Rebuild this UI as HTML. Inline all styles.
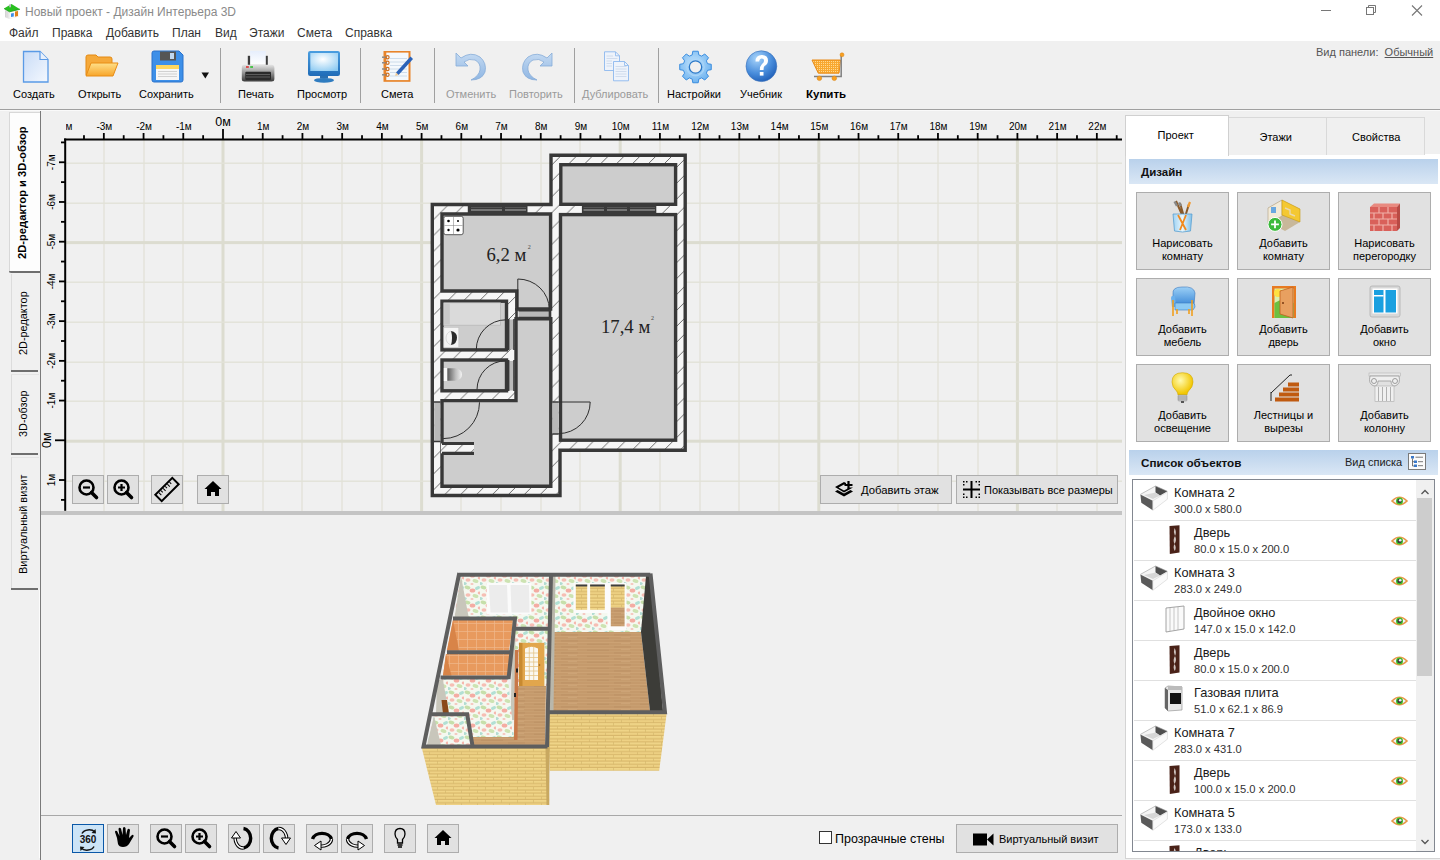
<!DOCTYPE html>
<html><head><meta charset="utf-8"><title>Дизайн Интерьера 3D</title>
<style>
*{margin:0;padding:0;box-sizing:border-box}
html,body{width:1440px;height:860px;overflow:hidden;background:#fff;font-family:"Liberation Sans",sans-serif;color:#000;position:relative}
.a{position:absolute}
.t{position:absolute;white-space:nowrap;line-height:1}
.sep{position:absolute;width:1px;background:#a0a0a0}
.tb{position:absolute;font-size:11px;white-space:nowrap;line-height:1;text-align:center}
.btn{position:absolute;background:#e1e1e1;border:1px solid #adadad}
.vt{position:absolute;transform:rotate(-90deg);transform-origin:0 0;white-space:nowrap;line-height:1}

</style></head><body>
<!-- title bar -->
<div class="a" style="left:0;top:0;width:1440px;height:41px;background:#fff"></div>
<svg class="a" style="left:0;top:0" width="24" height="22" viewBox="0 0 24 22">
  <path d="M5 10 L5 17.5 L9.5 19 L19 16.5 L19 10 L11 8 Z" fill="#e6e6e6"/>
  <path d="M9.5 12 L19 10 V16.5 L9.5 19 Z" fill="#f8f8f8"/>
  <path d="M5.5 10.5 V17 M7 11 V17.5" stroke="#cfcfcf" stroke-width="0.8"/>
  <path d="M4 8.5 L11.5 4 L20 9.2 L9.5 11.8 Z" fill="#28c020"/>
  <path d="M4 8.5 L9.5 11.8 L20 9.2" fill="none" stroke="#1a9a18" stroke-width="0.8"/>
  <rect x="9.3" y="4" width="1.6" height="3.3" fill="#c8c0d0"/>
  <path d="M11 13.5 L13.8 13 V16.5 L11 17 Z" fill="#3c8ce8"/>
  <path d="M15 11.5 L18 11 V16 L15 16.8 Z" fill="#e0801c"/>
</svg>
<div class="t" style="left:25px;top:6px;font-size:12px;color:#8a8a8a">Новый проект - Дизайн Интерьера 3D</div>
<svg class="a" style="left:1318px;top:4px" width="110" height="14" viewBox="0 0 110 14">
  <line x1="3" y1="6.5" x2="13" y2="6.5" stroke="#777" stroke-width="1"/>
  <rect x="48.5" y="3.5" width="7" height="7" fill="none" stroke="#777"/>
  <path d="M50.5 3.5 V1.5 H57.5 V8.5 H55.5" fill="none" stroke="#777"/>
  <path d="M94 1.5 L104 11.5 M104 1.5 L94 11.5" stroke="#777" stroke-width="1.1"/>
</svg>
<!-- menu -->
<div class="t" style="left:9px;top:27px;font-size:12px;color:#333;word-spacing:0">
<span class="t" style="left:0">Файл</span><span class="t" style="left:43px">Правка</span><span class="t" style="left:97px">Добавить</span><span class="t" style="left:163px">План</span><span class="t" style="left:206px">Вид</span><span class="t" style="left:240px">Этажи</span><span class="t" style="left:288px">Смета</span><span class="t" style="left:336px">Справка</span>
</div>
<!-- toolbar -->
<div class="a" style="left:0;top:41px;width:1440px;height:69px;background:#f0f0f0;border-bottom:1px solid #a0a0a0"></div>
<div class="sep" style="left:220px;top:48px;height:55px"></div>
<div class="sep" style="left:360px;top:48px;height:55px"></div>
<div class="sep" style="left:434px;top:48px;height:55px"></div>
<div class="sep" style="left:574px;top:48px;height:55px"></div>
<div class="sep" style="left:658px;top:48px;height:55px"></div>
<div class="tb" style="left:13px;top:89px">Создать</div>
<div class="tb" style="left:78px;top:89px">Открыть</div>
<div class="tb" style="left:139px;top:89px">Сохранить</div>
<div class="tb" style="left:238px;top:89px">Печать</div>
<div class="tb" style="left:297px;top:89px">Просмотр</div>
<div class="tb" style="left:381px;top:89px">Смета</div>
<div class="tb" style="left:446px;top:89px;color:#9a9a9a">Отменить</div>
<div class="tb" style="left:509px;top:89px;color:#9a9a9a">Повторить</div>
<div class="tb" style="left:582px;top:89px;color:#9a9a9a">Дублировать</div>
<div class="tb" style="left:667px;top:89px">Настройки</div>
<div class="tb" style="left:740px;top:89px">Учебник</div>
<div class="tb" style="left:806px;top:89px;font-weight:bold;font-size:11.5px">Купить</div>
<div class="t" style="left:1316px;top:47px;font-size:11px;color:#555">Вид панели:&nbsp; <span style="text-decoration:underline">Обычный</span></div>

<!-- new doc -->
<svg class="a" style="left:22px;top:50px" width="28" height="34" viewBox="0 0 28 34">
  <defs><linearGradient id="gdoc" x1="0" y1="0" x2="1" y2="1"><stop offset="0" stop-color="#c9dcf7"/><stop offset="1" stop-color="#f4f8fe"/></linearGradient></defs>
  <path d="M1.5 1.5 H18 L26 9.5 V32 H1.5 Z" fill="url(#gdoc)" stroke="#5a9ae6" stroke-width="1.3"/>
  <path d="M18 1.5 V9.5 H26" fill="#e8f0fc" stroke="#5a9ae6" stroke-width="1.2"/>
</svg>
<!-- folder -->
<svg class="a" style="left:85px;top:54px" width="34" height="24" viewBox="0 0 34 24">
  <defs><linearGradient id="gfold" x1="0" y1="0" x2="0" y2="1"><stop offset="0" stop-color="#ffe08a"/><stop offset="1" stop-color="#f7a52a"/></linearGradient></defs>
  <path d="M1 3 Q1 1 3 1 H11 L13 3 H25 Q27 3 27 5 V21 H1 Z" fill="#f5a93a" stroke="#e58a12" stroke-width="1"/>
  <path d="M6 9 H33 L28 22 H1 Z" fill="url(#gfold)" stroke="#e88c14" stroke-width="1"/>
</svg>
<!-- floppy -->
<svg class="a" style="left:151px;top:50px" width="33" height="33" viewBox="0 0 33 33">
  <path d="M1 3 Q1 1 3 1 H28 L32 5 V30 Q32 32 30 32 H3 Q1 32 1 30 Z" fill="#3d8fe8" stroke="#2a72cc" stroke-width="1"/>
  <rect x="9" y="1.5" width="16" height="9" fill="#555"/><rect x="19" y="3" width="4" height="6" fill="#c0d8f0"/>
  <rect x="5" y="15" width="23" height="15" fill="#f6f6f6"/><rect x="5" y="15" width="23" height="4" fill="#ffd760"/>
  <path d="M7 21.5 H26 M7 24 H26 M7 26.5 H26" stroke="#c8c8c8" stroke-width="0.8"/>
</svg>
<svg class="a" style="left:201px;top:72px" width="9" height="7" viewBox="0 0 9 7"><path d="M0.5 0.5 H8 L4.3 6.5 Z" fill="#111"/></svg>
<!-- printer -->
<svg class="a" style="left:240px;top:49px" width="36" height="34" viewBox="0 0 36 34">
  <defs>
    <linearGradient id="gpbody" x1="0" y1="0" x2="0" y2="1"><stop offset="0" stop-color="#e4e4e4"/><stop offset="0.45" stop-color="#9a9a9a"/><stop offset="1" stop-color="#3a3a3a"/></linearGradient>
    <linearGradient id="gpaper" x1="0" y1="0" x2="0" y2="1"><stop offset="0" stop-color="#e6eefc"/><stop offset="1" stop-color="#ffffff"/></linearGradient>
  </defs>
  <rect x="7.8" y="6.8" width="20" height="10" fill="#3c3c3c"/>
  <rect x="10.1" y="1.9" width="15.7" height="14" fill="url(#gpaper)"/>
  <path d="M4 15.8 H31.5 Q34.4 15.8 34.4 19 V30 Q34.4 32.5 31.5 32.5 H4.5 Q1.8 32.5 1.8 30 V19 Q1.8 15.8 4 15.8 Z" fill="url(#gpbody)"/>
  <rect x="5.3" y="22.8" width="25.7" height="8.3" rx="1" fill="#2a2a2a"/>
  <path d="M6 25.5 H30 M6 28 H30" stroke="#6a6a6a" stroke-width="0.8"/>
  <rect x="6" y="17.2" width="2.8" height="1.6" fill="#e03030"/><rect x="10.2" y="17.2" width="2.8" height="1.6" fill="#30c030"/>
</svg>
<!-- monitor -->
<svg class="a" style="left:306px;top:50px" width="35" height="34" viewBox="0 0 35 34">
  <defs><radialGradient id="gmon" cx="0.45" cy="0.35" r="0.75"><stop offset="0" stop-color="#ffffff"/><stop offset="1" stop-color="#8ccaf2"/></radialGradient>
  <linearGradient id="gbez" x1="0" y1="0" x2="0" y2="1"><stop offset="0" stop-color="#4a9ee0"/><stop offset="1" stop-color="#1f6cb8"/></linearGradient></defs>
  <rect x="2" y="0.9" width="32" height="25" rx="2.2" fill="url(#gbez)"/>
  <rect x="4.3" y="3" width="27.7" height="18" fill="url(#gmon)"/>
  <rect x="14" y="26" width="8" height="2.6" fill="#2a6fb0"/>
  <ellipse cx="18" cy="30.3" rx="10" ry="2.4" fill="#2f7cc0"/>
</svg>
<!-- notebook -->
<svg class="a" style="left:381px;top:50px" width="33" height="33" viewBox="0 0 33 33">
  <rect x="2.5" y="1" width="27" height="30.8" fill="#e8842a"/>
  <rect x="5.3" y="2.6" width="22.2" height="27.5" fill="#f4f8fc"/>
  <path d="M9 8.5 H26 M9 12 H26 M9 15.5 H26 M9 19 H26 M9 22.5 H26 M9 26 H26" stroke="#c4d4e6" stroke-width="0.8"/>
  <g fill="none" stroke="#8a8a8a" stroke-width="1.5"><path d="M1 7.2 H6"/><path d="M1 12.75 H6"/><path d="M1 19 H6"/><path d="M1 24.8 H6"/></g>
  <g fill="none" stroke="#d07020" stroke-width="1.2"><circle cx="6.5" cy="7.2" r="1.6"/><circle cx="6.5" cy="12.75" r="1.6"/><circle cx="6.5" cy="19" r="1.6"/><circle cx="6.5" cy="24.8" r="1.6"/></g>
  <path d="M15 22.5 L29.5 6.5 L32 9 L17.5 25 Z" fill="#2a62b8"/>
  <path d="M15 22.5 L17.5 25 L14.2 26 Z" fill="#f0c890"/>
</svg>
<!-- undo -->
<svg class="a" style="left:454px;top:50px" width="34" height="33" viewBox="0 0 34 33">
  <defs><linearGradient id="gund" x1="0" y1="0" x2="0" y2="1"><stop offset="0" stop-color="#c4daf2"/><stop offset="1" stop-color="#8fb6e3"/></linearGradient></defs>
  <path d="M2 3 L2 16 L14 16 L10 12 Q15 8 21 10 Q27 13 26 20 Q25 26 17 30 Q28 30 31 22 Q33 13 26 7 Q17 1 7 8 Z" fill="url(#gund)" stroke="#86acd8" stroke-width="0.8"/>
</svg>
<!-- redo -->
<svg class="a" style="left:520px;top:50px" width="34" height="33" viewBox="0 0 34 33">
  <path d="M32 3 L32 16 L20 16 L24 12 Q19 8 13 10 Q7 13 8 20 Q9 26 17 30 Q6 30 3 22 Q1 13 8 7 Q17 1 27 8 Z" fill="url(#gund)" stroke="#86acd8" stroke-width="0.8"/>
</svg>
<!-- duplicate -->
<svg class="a" style="left:603px;top:51px" width="28" height="32" viewBox="0 0 28 32">
  <path d="M1.5 0.8 H12.5 L16.5 4.8 V19.5 H1.5 Z" fill="#eef3fb" stroke="#8cb8ee" stroke-width="0.9"/>
  <path d="M12.5 0.8 V4.8 H16.5" fill="none" stroke="#8cb8ee" stroke-width="0.8"/>
  <path d="M10.5 10.5 H21.5 L25.5 14.5 V29.8 H10.5 Z" fill="#eef3fb" stroke="#8cb8ee" stroke-width="0.9"/>
  <path d="M21.5 10.5 V14.5 H25.5" fill="none" stroke="#8cb8ee" stroke-width="0.8"/>
  <path d="M3.5 5 H10 M3.5 7.5 H14.5 M3.5 10 H9 M3.5 12.5 H9 M3.5 15 H9 M12.5 15.5 H23.5 M12.5 18 H23.5 M12.5 20.5 H23.5 M12.5 23 H23.5 M12.5 25.5 H23.5" stroke="#c8d6ea" stroke-width="0.8"/>
</svg>
<!-- gear -->
<svg class="a" style="left:678px;top:50px" width="35" height="34" viewBox="0 0 35 34">
  <defs><radialGradient id="ggear" cx="0.45" cy="0.4" r="0.6"><stop offset="0" stop-color="#c4e4fc"/><stop offset="1" stop-color="#70b4f0"/></radialGradient></defs>
  <path d="M29.55 13.67 L33.27 14.29 L33.27 19.71 L29.55 20.33 L28.38 23.16 L30.56 26.24 L26.74 30.06 L23.66 27.88 L20.83 29.05 L20.21 32.77 L14.79 32.77 L14.17 29.05 L11.34 27.88 L8.26 30.06 L4.44 26.24 L6.62 23.16 L5.45 20.33 L1.73 19.71 L1.73 14.29 L5.45 13.67 L6.62 10.84 L4.44 7.76 L8.26 3.94 L11.34 6.12 L14.17 4.95 L14.79 1.23 L20.21 1.23 L20.83 4.95 L23.66 6.12 L26.74 3.94 L30.56 7.76 L28.38 10.84 Z" fill="url(#ggear)" stroke="#2f86dc" stroke-width="0.9" stroke-linejoin="round"/>
  <circle cx="17.5" cy="17" r="8.6" fill="none" stroke="#a8d4f8" stroke-width="1.2"/>
  <circle cx="17.5" cy="17" r="6.2" fill="#f0f0f0" stroke="#2a78c8" stroke-width="1.3"/>
</svg>
<!-- help -->
<svg class="a" style="left:745px;top:50px" width="33" height="33" viewBox="0 0 33 33">
  <defs><radialGradient id="ghelp" cx="0.35" cy="0.25" r="0.8"><stop offset="0" stop-color="#a8d4fa"/><stop offset="0.6" stop-color="#4a8edc"/><stop offset="1" stop-color="#1f5fb8"/></radialGradient></defs>
  <circle cx="16.4" cy="16.2" r="15.4" fill="url(#ghelp)" stroke="#3a70b8" stroke-width="0.6"/>
  <path d="M10.5 11.5 Q10.5 5 16.8 5 Q23 5 23 10.5 Q23 14 19.5 16 Q18.5 17 18.5 20 H14.8 Q14.8 16 16.8 14.2 Q19 12.6 19 10.8 Q19 8.5 16.8 8.5 Q14.5 8.5 14.2 11.5 Z" fill="#fff"/>
  <rect x="14.8" y="22" width="3.7" height="3.6" fill="#fff"/>
</svg>
<!-- cart -->
<svg class="a" style="left:809px;top:51px" width="37" height="31" viewBox="0 0 37 31">
  <defs><pattern id="cdots" patternUnits="userSpaceOnUse" width="2" height="2"><rect width="2" height="2" fill="#f8a830"/><rect width="1" height="1" fill="#ffd890"/></pattern></defs>
  <path d="M3 9 H31.5 L30 22.2 H9.3 Z" fill="url(#cdots)" stroke="#e88a18" stroke-width="1"/>
  <path d="M32.2 4 V25.6 H5" stroke="#808080" stroke-width="1.5" fill="none"/>
  <circle cx="33" cy="3.8" r="2" fill="#f8a020" stroke="#d88010" stroke-width="0.5"/>
  <circle cx="10.4" cy="27.3" r="2.3" fill="#f8a020" stroke="#d88010" stroke-width="0.5"/><circle cx="25.3" cy="27.3" r="2.3" fill="#f8a020" stroke="#d88010" stroke-width="0.5"/>
</svg>

<div class="a" style="left:41px;top:110px;width:1081px;height:401px;background:#f0f0f0"></div>
<svg class="a" style="left:0;top:0" width="1440" height="860" viewBox="0 0 1440 860">
<defs><clipPath id="gclip"><rect x="66" y="140" width="1056" height="371"/></clipPath></defs>
<g clip-path="url(#gclip)">
<rect x="63.50" y="140" width="1" height="371" fill="#dddcd0"/>
<rect x="103.50" y="140" width="1" height="371" fill="#dddcd0"/>
<rect x="143.50" y="140" width="1" height="371" fill="#dddcd0"/>
<rect x="182.50" y="140" width="1" height="371" fill="#dddcd0"/>
<rect x="221.50" y="140" width="3" height="371" fill="#dcdcd0"/>
<rect x="262.50" y="140" width="1" height="371" fill="#dddcd0"/>
<rect x="301.50" y="140" width="1" height="371" fill="#dddcd0"/>
<rect x="341.50" y="140" width="1" height="371" fill="#dddcd0"/>
<rect x="381.50" y="140" width="1" height="371" fill="#dddcd0"/>
<rect x="420.10" y="140" width="3" height="371" fill="#dcdcd0"/>
<rect x="460.50" y="140" width="1" height="371" fill="#dddcd0"/>
<rect x="500.50" y="140" width="1" height="371" fill="#dddcd0"/>
<rect x="540.50" y="140" width="1" height="371" fill="#dddcd0"/>
<rect x="579.50" y="140" width="1" height="371" fill="#dddcd0"/>
<rect x="618.70" y="140" width="3" height="371" fill="#dcdcd0"/>
<rect x="659.50" y="140" width="1" height="371" fill="#dddcd0"/>
<rect x="699.50" y="140" width="1" height="371" fill="#dddcd0"/>
<rect x="738.50" y="140" width="1" height="371" fill="#dddcd0"/>
<rect x="778.50" y="140" width="1" height="371" fill="#dddcd0"/>
<rect x="817.30" y="140" width="3" height="371" fill="#dcdcd0"/>
<rect x="858.50" y="140" width="1" height="371" fill="#dddcd0"/>
<rect x="897.50" y="140" width="1" height="371" fill="#dddcd0"/>
<rect x="937.50" y="140" width="1" height="371" fill="#dddcd0"/>
<rect x="977.50" y="140" width="1" height="371" fill="#dddcd0"/>
<rect x="1015.90" y="140" width="3" height="371" fill="#dcdcd0"/>
<rect x="1056.50" y="140" width="1" height="371" fill="#dddcd0"/>
<rect x="1096.50" y="140" width="1" height="371" fill="#dddcd0"/>
<rect x="66" y="122.50" width="1056" height="1.4" fill="#e2e2d8"/>
<rect x="66" y="162.50" width="1056" height="1.4" fill="#e2e2d8"/>
<rect x="66" y="202.50" width="1056" height="1.4" fill="#e2e2d8"/>
<rect x="66" y="241.10" width="1056" height="3" fill="#dcdcd0"/>
<rect x="66" y="281.50" width="1056" height="1.4" fill="#e2e2d8"/>
<rect x="66" y="321.50" width="1056" height="1.4" fill="#e2e2d8"/>
<rect x="66" y="361.50" width="1056" height="1.4" fill="#e2e2d8"/>
<rect x="66" y="400.50" width="1056" height="1.4" fill="#e2e2d8"/>
<rect x="66" y="439.70" width="1056" height="3" fill="#dcdcd0"/>
<rect x="66" y="480.50" width="1056" height="1.4" fill="#e2e2d8"/>
<rect x="66" y="520.50" width="1056" height="1.4" fill="#e2e2d8"/>
</g>
<rect x="64" y="138.5" width="1058" height="2" fill="#000"/>
<rect x="64.2" y="138.5" width="2" height="372.3" fill="#000"/>
<g fill="#000">
<rect x="83.08" y="135.2" width="1.8" height="4"/>
<rect x="102.94" y="133" width="1.8" height="6"/>
<rect x="122.80" y="135.2" width="1.8" height="4"/>
<rect x="142.66" y="133" width="1.8" height="6"/>
<rect x="162.52" y="135.2" width="1.8" height="4"/>
<rect x="182.38" y="133" width="1.8" height="6"/>
<rect x="202.24" y="135.2" width="1.8" height="4"/>
<rect x="222.10" y="129" width="1.8" height="10"/>
<rect x="241.96" y="135.2" width="1.8" height="4"/>
<rect x="261.82" y="133" width="1.8" height="6"/>
<rect x="281.68" y="135.2" width="1.8" height="4"/>
<rect x="301.54" y="133" width="1.8" height="6"/>
<rect x="321.40" y="135.2" width="1.8" height="4"/>
<rect x="341.26" y="133" width="1.8" height="6"/>
<rect x="361.12" y="135.2" width="1.8" height="4"/>
<rect x="380.98" y="133" width="1.8" height="6"/>
<rect x="400.84" y="135.2" width="1.8" height="4"/>
<rect x="420.70" y="133" width="1.8" height="6"/>
<rect x="440.56" y="135.2" width="1.8" height="4"/>
<rect x="460.42" y="133" width="1.8" height="6"/>
<rect x="480.28" y="135.2" width="1.8" height="4"/>
<rect x="500.14" y="133" width="1.8" height="6"/>
<rect x="520.00" y="135.2" width="1.8" height="4"/>
<rect x="539.86" y="133" width="1.8" height="6"/>
<rect x="559.72" y="135.2" width="1.8" height="4"/>
<rect x="579.58" y="133" width="1.8" height="6"/>
<rect x="599.44" y="135.2" width="1.8" height="4"/>
<rect x="619.30" y="133" width="1.8" height="6"/>
<rect x="639.16" y="135.2" width="1.8" height="4"/>
<rect x="659.02" y="133" width="1.8" height="6"/>
<rect x="678.88" y="135.2" width="1.8" height="4"/>
<rect x="698.74" y="133" width="1.8" height="6"/>
<rect x="718.60" y="135.2" width="1.8" height="4"/>
<rect x="738.46" y="133" width="1.8" height="6"/>
<rect x="758.32" y="135.2" width="1.8" height="4"/>
<rect x="778.18" y="133" width="1.8" height="6"/>
<rect x="798.04" y="135.2" width="1.8" height="4"/>
<rect x="817.90" y="133" width="1.8" height="6"/>
<rect x="837.76" y="135.2" width="1.8" height="4"/>
<rect x="857.62" y="133" width="1.8" height="6"/>
<rect x="877.48" y="135.2" width="1.8" height="4"/>
<rect x="897.34" y="133" width="1.8" height="6"/>
<rect x="917.20" y="135.2" width="1.8" height="4"/>
<rect x="937.06" y="133" width="1.8" height="6"/>
<rect x="956.92" y="135.2" width="1.8" height="4"/>
<rect x="976.78" y="133" width="1.8" height="6"/>
<rect x="996.64" y="135.2" width="1.8" height="4"/>
<rect x="1016.50" y="133" width="1.8" height="6"/>
<rect x="1036.36" y="135.2" width="1.8" height="4"/>
<rect x="1056.22" y="133" width="1.8" height="6"/>
<rect x="1076.08" y="135.2" width="1.8" height="4"/>
<rect x="1095.94" y="133" width="1.8" height="6"/>
<rect x="1115.80" y="135.2" width="1.8" height="4"/>
<rect x="61" y="141.50" width="4" height="1.8"/>
<rect x="59" y="161.36" width="6" height="1.8"/>
<rect x="61" y="181.22" width="4" height="1.8"/>
<rect x="59" y="201.08" width="6" height="1.8"/>
<rect x="61" y="220.94" width="4" height="1.8"/>
<rect x="59" y="240.80" width="6" height="1.8"/>
<rect x="61" y="260.66" width="4" height="1.8"/>
<rect x="59" y="280.52" width="6" height="1.8"/>
<rect x="61" y="300.38" width="4" height="1.8"/>
<rect x="59" y="320.24" width="6" height="1.8"/>
<rect x="61" y="340.10" width="4" height="1.8"/>
<rect x="59" y="359.96" width="6" height="1.8"/>
<rect x="61" y="379.82" width="4" height="1.8"/>
<rect x="59" y="399.68" width="6" height="1.8"/>
<rect x="55" y="439.40" width="10" height="1.8"/>
<rect x="59" y="479.12" width="6" height="1.8"/>
<rect x="61" y="498.98" width="4" height="1.8"/>
</g>
<defs><clipPath id="rclip"><rect x="66" y="110" width="1056" height="28"/></clipPath><clipPath id="lclip"><rect x="41" y="141" width="24" height="370"/></clipPath></defs>
<g clip-path="url(#rclip)" font-family="Liberation Sans" font-size="10" text-anchor="middle" fill="#000">
<text x="64.62" y="130">-4м</text>
<text x="104.34" y="130">-3м</text>
<text x="144.06" y="130">-2м</text>
<text x="183.78" y="130">-1м</text>
<text x="223.00" y="125.5" font-size="12.5">0м</text>
<text x="263.22" y="130">1м</text>
<text x="302.94" y="130">2м</text>
<text x="342.66" y="130">3м</text>
<text x="382.38" y="130">4м</text>
<text x="422.10" y="130">5м</text>
<text x="461.82" y="130">6м</text>
<text x="501.54" y="130">7м</text>
<text x="541.26" y="130">8м</text>
<text x="580.98" y="130">9м</text>
<text x="620.70" y="130">10м</text>
<text x="660.42" y="130">11м</text>
<text x="700.14" y="130">12м</text>
<text x="739.86" y="130">13м</text>
<text x="779.58" y="130">14м</text>
<text x="819.30" y="130">15м</text>
<text x="859.02" y="130">16м</text>
<text x="898.74" y="130">17м</text>
<text x="938.46" y="130">18м</text>
<text x="978.18" y="130">19м</text>
<text x="1017.90" y="130">20м</text>
<text x="1057.62" y="130">21м</text>
<text x="1097.34" y="130">22м</text>
</g>
<g clip-path="url(#lclip)" font-family="Liberation Sans" font-size="10" text-anchor="middle" fill="#000">
<text transform="translate(55,122.54) rotate(-90)">-8м</text>
<text transform="translate(55,162.26) rotate(-90)">-7м</text>
<text transform="translate(55,201.98) rotate(-90)">-6м</text>
<text transform="translate(55,241.70) rotate(-90)">-5м</text>
<text transform="translate(55,281.42) rotate(-90)">-4м</text>
<text transform="translate(55,321.14) rotate(-90)">-3м</text>
<text transform="translate(55,360.86) rotate(-90)">-2м</text>
<text transform="translate(55,400.58) rotate(-90)">-1м</text>
<text transform="translate(51,440.30) rotate(-90)" font-size="12.5">0м</text>
<text transform="translate(55,480.02) rotate(-90)">1м</text>
</g>
</svg>
<div class="a" style="left:0;top:110px;width:41px;height:750px;background:#f0f0f0"></div>
<div class="a" style="left:40px;top:111px;width:1px;height:749px;background:#7a7a7a"></div>
<div class="a" style="left:39px;top:590px;width:1px;height:268px;background:#fcfcfc"></div>
<!-- active tab -->
<div class="a" style="left:9px;top:112px;width:31px;height:161px;background:#fdfdfd;border-left:1px solid #d8d8d8;border-top:1px solid #d8d8d8"></div>
<div class="a" style="left:9px;top:271px;width:31px;height:2px;background:#6e6e6e;border-radius:0 0 0 2px"></div>
<div class="vt" style="left:17px;top:259px;font-size:11.2px;font-weight:bold;color:#000">2D-редактор и 3D-обзор</div>
<!-- tab 2 -->
<div class="a" style="left:11px;top:274px;width:28px;height:98px;border-left:1px solid #dcdcdc"></div>
<div class="a" style="left:11px;top:370px;width:27px;height:2px;background:#6e6e6e"></div>
<div class="vt" style="left:18px;top:355px;font-size:10.9px;color:#000">2D-редактор</div>
<!-- tab 3 -->
<div class="a" style="left:11px;top:374px;width:28px;height:81px;border-left:1px solid #dcdcdc;border-top:1px solid #e4e4e4"></div>
<div class="a" style="left:11px;top:453px;width:27px;height:2px;background:#6e6e6e"></div>
<div class="vt" style="left:18px;top:437px;font-size:10.9px;color:#000">3D-обзор</div>
<!-- tab 4 -->
<div class="a" style="left:11px;top:457px;width:28px;height:133px;border-left:1px solid #dcdcdc;border-top:1px solid #e4e4e4"></div>
<div class="a" style="left:11px;top:588px;width:27px;height:2px;background:#6e6e6e"></div>
<div class="vt" style="left:18px;top:574px;font-size:11px;color:#000">Виртуальный визит</div>

<svg class="a" style="left:0;top:0" width="1440" height="860" viewBox="0 0 1440 860">
<defs>
  <pattern id="hatch" patternUnits="userSpaceOnUse" width="15.9" height="15.9" x="1.2" y="0">
    <rect width="15.9" height="15.9" fill="#f6f6f6"/>
    <path d="M-2 17.9 L17.9 -2 M-2 2 L2 -2 M13.9 17.9 L17.9 13.9" stroke="#3a3a3a" stroke-width="0.75"/>
  </pattern>
</defs>
<!-- outer wall region -->
<path d="M432.3 204.5 H551 V155.3 H685.2 V450.2 H560 V495.5 H432.3 Z" fill="url(#hatch)"/>
<g fill="#cdcdcd" stroke="#383838" stroke-width="3.4" stroke-linejoin="miter">
  <!-- kitchen -->
  <path d="M442 214 H550.6 V309 H516.8 V291 H442 Z"/>
  <!-- balcony -->
  <rect x="560.8" y="164.7" width="114.8" height="39.6"/>
  <!-- big room -->
  <rect x="560.5" y="214.6" width="115.1" height="225.6"/>
  <!-- bathroom -->
  <rect x="442" y="301.2" width="64.5" height="48.7"/>
  <!-- toilet -->
  <rect x="442" y="360" width="64.5" height="30.8"/>
  <!-- hall -->
  <path d="M516 318.7 H550.8 V486.2 H442 V400.6 H516 Z"/>
</g>
<!-- stub wall in hall (hatched) -->
<rect x="441" y="443.5" width="33" height="9.8" fill="url(#hatch)"/>
<path d="M442 443.5 H474 M442 453.3 H474" stroke="#383838" stroke-width="3.2"/>
<!-- door strips -->
<g fill="#b9b9b9">
  <rect x="518.5" y="311" width="30.5" height="6.5"/>
  <rect x="508.5" y="319.5" width="6" height="30"/>
  <rect x="508.5" y="361" width="6" height="29.5"/>
  <rect x="434.2" y="402.3" width="6" height="39"/>
  <rect x="552.4" y="402.2" width="6.3" height="31.8"/>
</g>
<g fill="none" stroke="#383838" stroke-width="1.6">
  <path d="M518.5 310.8 H550 M518.5 317.6 H550"/>
  <path d="M516.5 308 V320 M550 308 V320" stroke-width="2.6"/>
  <path d="M508.6 319 V350 M514 319 V350"/>
  <path d="M508.6 360 V391 M514 360 V391"/>
  <path d="M434 402 H440.5 M434 441.5 H440.5"/>
  <path d="M552.3 402 H558.7 M552.3 434 H558.7"/>
</g>
<!-- outer boundary stroke -->
<path d="M432.3 204.5 H551 V155.3 H685.2 V450.2 H560 V495.5 H432.3 Z" fill="none" stroke="#383838" stroke-width="3.4"/>
<!-- windows -->
<rect x="467.8" y="203" width="59.7" height="11.7" fill="#3a3a3a"/>
<path d="M471 210 H502 M505 210 H526" stroke="#8a8a8a" stroke-width="1.6"/>
<path d="M471 207.5 H502 M505 207.5 H526" stroke="#555" stroke-width="1"/>
<rect x="581.9" y="203" width="74.4" height="12" fill="#3a3a3a"/>
<path d="M583.5 210 H604 M607 210 H627 M630 210 H655" stroke="#8a8a8a" stroke-width="1.6"/>
<path d="M583.5 207.5 H604 M607 207.5 H627 M630 207.5 H655" stroke="#555" stroke-width="1"/>
<!-- bathtub, sink, toilet -->
<defs><linearGradient id="gtoil" x1="0" x2="1"><stop offset="0" stop-color="#444"/><stop offset="0.6" stop-color="#bbb"/><stop offset="1" stop-color="#f4f4f4"/></linearGradient></defs>
<rect x="443.8" y="302.8" width="56.7" height="22.4" fill="#dadada" stroke="#b4b4b4" stroke-width="0.7"/>
<rect x="444.3" y="303.5" width="5.5" height="21" fill="#c8c8c8"/>
<rect x="443.8" y="327.5" width="15" height="20" fill="#f4f4f4" stroke="#c4c4c4" stroke-width="0.6"/>
<path d="M451 331 Q457 332 457 337.5 Q457 344 451 345 Q453 338 451 331 Z" fill="#2a2a2a"/>
<path d="M451 331 Q446 333 446 338 Q446 343 451 345" fill="none" stroke="#bbb" stroke-width="0.5"/>
<path d="M445.5 368.2 H455 Q462 369 462 374.5 Q462 380 455 380.7 H445.5 Z" fill="url(#gtoil)"/>
<rect x="443.8" y="368" width="3.5" height="13" fill="#fafafa"/>
<!-- door arcs -->
<g fill="none" stroke="#2e2e2e" stroke-width="1">
  <path d="M517.8 279 A31.5 30.5 0 0 1 549.3 309.5"/>
  <path d="M517.8 279 V309"/>
  <path d="M476.3 349.5 A29.7 29.7 0 0 1 506 319.8"/>
  <path d="M477 389.5 A28.8 28.8 0 0 1 505.8 360.8"/>
  <path d="M479.5 402.3 A36.3 36.3 0 0 1 443.2 438.6"/>
  <path d="M558.6 402 H590.2 A31.6 31.6 0 0 1 558.6 433.6"/>
</g>
<!-- stove -->
<g>
  <rect x="443.8" y="216.3" width="19.4" height="18.4" rx="2" fill="#fff" stroke="#333" stroke-width="0.8"/>
  <path d="M453.5 217 V234 M444.5 225.5 H462.5" stroke="#777" stroke-width="0.5"/>
  <circle cx="448.5" cy="221" r="1.3" fill="#000"/><circle cx="458" cy="221" r="1" fill="#000"/>
  <circle cx="448.5" cy="230" r="1.2" fill="#000"/><circle cx="458" cy="230" r="1.6" fill="#000"/>
</g>
<!-- area labels -->
<text x="486.5" y="261.4" font-family="Liberation Serif" font-size="18.7" fill="#222">6,2 м</text>
<text x="527.8" y="249" font-family="Liberation Serif" font-size="6" fill="#444">2</text>
<text x="601" y="332.6" font-family="Liberation Serif" font-size="18.7" fill="#222">17,4 м</text>
<text x="651" y="320" font-family="Liberation Serif" font-size="6" fill="#444">2</text>
</svg>

<!-- 2D zoom buttons -->
<div class="btn" style="left:72px;top:475px;width:32px;height:29px"></div>
<div class="btn" style="left:107px;top:475px;width:32px;height:29px"></div>
<div class="btn" style="left:151px;top:475px;width:32px;height:29px"></div>
<div class="btn" style="left:197px;top:475px;width:32px;height:29px"></div>
<svg class="a" style="left:0;top:0" width="1440" height="860" viewBox="0 0 1440 860">
  <g fill="none" stroke="#000">
    <circle cx="86.5" cy="487.5" r="7" stroke-width="2.6"/>
    <path d="M91.5 492.5 L96.5 497.5" stroke-width="3.6" stroke-linecap="round"/>
    <path d="M83 487.5 H90" stroke-width="2.2"/>
    <circle cx="121.5" cy="487.5" r="7" stroke-width="2.6"/>
    <path d="M126.5 492.5 L131.5 497.5" stroke-width="3.6" stroke-linecap="round"/>
    <path d="M118 487.5 H125 M121.5 484 V491" stroke-width="2.2"/>
  </g>
  <g transform="translate(167,489.5) rotate(-45)">
    <rect x="-12" y="-4.5" width="24" height="9" fill="none" stroke="#000" stroke-width="2"/>
    <path d="M-8 -3.5 V0 M-5 -3.5 V-1 M-2 -3.5 V0 M1 -3.5 V-1 M4 -3.5 V0 M7 -3.5 V-1" stroke="#000" stroke-width="1"/>
  </g>
  <path d="M213 481 L204.5 489 H207 V496 H211 V492 H215 V496 H219 V489 H221.5 Z" fill="#000"/>
</svg>
<!-- add floor / show dims -->
<div class="btn" style="left:820px;top:475px;width:132px;height:29px"></div>
<div class="btn" style="left:956px;top:475px;width:162px;height:29px"></div>
<svg class="a" style="left:834px;top:480px" width="22" height="19" viewBox="0 0 22 19">
  <path d="M1 11.5 L10 16.5 L19 11.5 L16.5 10 L10 13.5 L3.5 10 Z" fill="#000"/>
  <path d="M1 7 L10 2 L12 3 V5 L10 4.5 L4.5 7.5 L10 10.5 L15.5 7.5 H19 L10 12.5 Z" fill="#000"/>
  <path d="M14.5 1 V9 M10.5 5 H18.5" stroke="#000" stroke-width="2.2"/>
</svg>
<div class="t" style="left:861px;top:485px;font-size:11.3px;color:#000">Добавить этаж</div>
<svg class="a" style="left:963px;top:481px" width="17" height="17" viewBox="0 0 17 17">
  <path d="M8.5 0 V17 M0 8.5 H17" stroke="#000" stroke-width="2"/>
  <g fill="#000"><rect x="0" y="0" width="1.5" height="1.5"/><rect x="3" y="0" width="1.5" height="1.5"/><rect x="12.5" y="0" width="1.5" height="1.5"/><rect x="15.5" y="0" width="1.5" height="1.5"/>
  <rect x="0" y="3" width="1.5" height="1.5"/><rect x="15.5" y="3" width="1.5" height="1.5"/><rect x="0" y="12.5" width="1.5" height="1.5"/><rect x="15.5" y="12.5" width="1.5" height="1.5"/>
  <rect x="0" y="15.5" width="1.5" height="1.5"/><rect x="3" y="15.5" width="1.5" height="1.5"/><rect x="12.5" y="15.5" width="1.5" height="1.5"/><rect x="15.5" y="15.5" width="1.5" height="1.5"/></g>
</svg>
<div class="t" style="left:984px;top:485px;font-size:11px;color:#000">Показывать все размеры</div>
<!-- splitter -->
<div class="a" style="left:41px;top:511px;width:1081px;height:4px;background:#c4c4c4"></div>
<!-- 3D area bg -->
<div class="a" style="left:41px;top:515px;width:1081px;height:300px;background:#f0f0f0"></div>
<div class="a" style="left:41px;top:815px;width:1081px;height:1px;background:#a8a8a8"></div>
<div class="a" style="left:41px;top:816px;width:1081px;height:44px;background:#f0f0f0"></div>


<svg class="a" style="left:0;top:0" width="1440" height="860" viewBox="0 0 1440 860">
<defs>
  <filter id="wpblur" x="-20%" y="-20%" width="140%" height="140%"><feGaussianBlur stdDeviation="0.45"/></filter>
  <pattern id="wp" patternUnits="userSpaceOnUse" width="16" height="15">
    <rect width="16" height="15" fill="#f5f8f0"/>
    <g filter="url(#wpblur)">
    <ellipse cx="3.5" cy="2.5" rx="3" ry="1.7" fill="#c6dfaa" transform="rotate(15 3.5 2.5)"/>
    <ellipse cx="8.5" cy="5.5" rx="2.8" ry="2" fill="#f4aca2"/>
    <ellipse cx="13.5" cy="3" rx="2.6" ry="1.7" fill="#b2e0d4" transform="rotate(-20 13.5 3)"/>
    <ellipse cx="4" cy="10" rx="2.5" ry="1.8" fill="#f6beb4"/>
    <ellipse cx="11.5" cy="11" rx="3" ry="1.8" fill="#cde3b2" transform="rotate(15 11.5 11)"/>
    <ellipse cx="15.5" cy="8" rx="1.8" ry="1.4" fill="#f6b8ae"/>
    <ellipse cx="0.5" cy="13.5" rx="2.2" ry="1.5" fill="#b2dcd2"/>
    <ellipse cx="8" cy="14" rx="1.6" ry="1" fill="#f6c4bc"/>
    </g>
  </pattern>
  <pattern id="brick" patternUnits="userSpaceOnUse" width="16" height="6.4">
    <rect width="16" height="6.4" fill="#e9cb7c"/>
    <rect y="0.3" width="16" height="1.1" fill="#f4da8e"/>
    <rect y="3.5" width="16" height="1.1" fill="#f2d68a"/>
    <rect y="2.5" width="16" height="0.7" fill="#d2b066"/>
    <rect y="5.7" width="16" height="0.7" fill="#d2b066"/>
    <rect x="5" y="0" width="0.7" height="2.6" fill="#d6b86c"/>
    <rect x="13" y="3.2" width="0.7" height="2.6" fill="#d6b86c"/>
  </pattern>
  <pattern id="wood" patternUnits="userSpaceOnUse" width="53" height="6">
    <rect width="53" height="6" fill="#c59a6c"/>
    <rect y="0" width="53" height="0.9" fill="#cda375"/>
    <rect y="3" width="53" height="0.8" fill="#c9a072"/>
    <rect x="4" y="1.8" width="22" height="0.7" fill="#b98e62"/>
    <rect x="31" y="4.6" width="17" height="0.7" fill="#b98e62"/>
    <rect x="38" y="1.5" width="9" height="0.6" fill="#d4ac80"/>
  </pattern>
  <pattern id="tile" patternUnits="userSpaceOnUse" width="9" height="8">
    <rect width="9" height="8" fill="#e89a5e"/>
    <rect x="8.3" width="0.7" height="8" fill="#f0b88c"/>
    <rect y="7.3" width="9" height="0.7" fill="#f0b88c"/>
  </pattern>
</defs>
<!-- brick facades -->
<path d="M421.8 748 H548.5 L549.2 805 H436 Z" fill="url(#brick)"/>
<path d="M547.5 713 H666.7 L659.2 770.8 H549.8 Z" fill="url(#brick)"/>
<path d="M545.5 748 L547.5 713 L549.8 713 L549.2 805 L546.5 805 Z" fill="#c8a860"/>
<!-- big room -->
<path d="M553 576 H648 L641 632 H554 Z" fill="url(#wp)"/>
<path d="M554 632 H641 L650 711 H551 Z" fill="url(#wood)"/>
<path d="M550.5 576 H555.5 L553.5 711 H549 Z" fill="#b9b7ab"/>
<path d="M646 576 H651 L663 711 H650 L641 632 Z" fill="#3c3c38"/>
<!-- big room windows -->
<rect x="573.4" y="583" width="35.5" height="30" fill="#fbfbfb"/>
<rect x="607.5" y="583" width="19" height="47" fill="#fbfbfb"/>
<rect x="575.8" y="584.8" width="11.4" height="25" fill="url(#brick)"/>
<rect x="590.1" y="584.8" width="14.7" height="25" fill="url(#brick)"/>
<rect x="610.8" y="584.8" width="13.8" height="23" fill="url(#brick)"/>
<rect x="610.8" y="607.8" width="13.8" height="18.5" fill="url(#wood)"/>
<rect x="575.8" y="584.5" width="11.4" height="2" fill="#3e3e3e"/><rect x="590.1" y="584.5" width="14.7" height="2" fill="#3e3e3e"/><rect x="610.8" y="584.5" width="13.8" height="2" fill="#3e3e3e"/>
<!-- kitchen back wall -->
<path d="M461 576 H550 V628.5 H515 V618 H454 Z" fill="url(#wp)"/>
<path d="M461 576 L468.7 617.5 H454.5 Z" fill="#c8c6bb"/>
<rect x="486.6" y="582.9" width="44.8" height="31.7" fill="#fbfbfb"/>
<path d="M488.8 585 H507 L508 612.5 H490.5 Z" fill="#ececec"/>
<path d="M510.5 585 H529 L529.5 612.5 H511.5 Z" fill="#ececec"/>
<!-- bathroom & toilet tiles -->
<path d="M453 620 H513.5 L509 650.5 H447 Z" fill="url(#tile)"/>
<path d="M453 620 L459 650.5 H447 Z" fill="#d88448"/>
<path d="M446 654 H511 L507.5 675.5 H443 Z" fill="url(#tile)"/>
<path d="M446 654 L451.5 675.5 H443 Z" fill="#d88448"/>
<!-- hall back wall + door -->
<path d="M514 630 H548 V686 H514 Z" fill="url(#wp)"/>
<rect x="519" y="642.8" width="25.4" height="43.5" fill="#e2a64c"/>
<path d="M519 642.8 H522.5 V686.3 H519 Z" fill="#c88a30"/>
<path d="M525 648.5 Q531.5 645 538 648.5 V680 H525 Z" fill="#fbf8f0"/>
<path d="M529.3 646.5 V680 M533.7 646.5 V680 M525 653 H538 M525 657.5 H538 M525 662 H538 M525 666.5 H538 M525 671 H538 M525 675.5 H538" stroke="#e4c488" stroke-width="0.8"/>
<circle cx="539.5" cy="665" r="0.8" fill="#8a5a20"/>
<!-- hall floor -->
<path d="M516 686 H546 L545 745 H472.5 L467.5 737 H514 Z" fill="url(#wood)"/>
<path d="M512.5 630 L515.5 630 L514.5 720 L510.5 720 Z" fill="#c8c6ba"/>
<path d="M515 650 L518.5 650 L517.5 740 L514 740 Z" fill="#c87848"/>
<path d="M516 668.5 L518 668.5 L518 672.5 L516 672.5 Z M514 693 L516 693 L516 697 L514 697 Z" fill="#222"/>
<!-- toilet front wall face -->
<path d="M442 679 H508 L514 737 H467 V715 H438 Z" fill="url(#wp)"/>
<path d="M437 680 L443 680 L449 714 L436 714 Z" fill="#c8c6bb"/>
<path d="M441.5 700 L447 700 L449 714 L443 714 Z" fill="#8a4a1a"/>
<!-- small room -->
<path d="M434 716 H466 L472 745 H427 Z" fill="url(#wp)"/>
<path d="M434 716 L441 745 H427 Z" fill="#c8c6bb"/>
<!-- walls -->
<g fill="none" stroke="#5e5e5e" stroke-width="4" stroke-linejoin="miter">
  <path d="M459 574.8 H650.3"/>
  <path d="M459.3 573 L423.5 746.5 H547.5"/>
  <path d="M650.5 573.5 L665 712.3 H547.5"/>
  <path d="M551 574 L547 747"/>
  <path d="M453 618.5 H515 L508.5 679"/>
  <path d="M447 652.3 H511"/>
  <path d="M440.5 677.5 H508.5"/>
  <path d="M515 628.7 H549"/>
  <path d="M432 714.3 H467.2 L472.5 746"/>
</g>
</svg>

<div class="a" style="left:72px;top:824px;width:32px;height:29px;background:#cce4f7;border:1px solid #0a58a8"></div>
<div class="btn" style="left:107px;top:824px;width:32px;height:29px"></div>
<div class="btn" style="left:150px;top:824px;width:32px;height:29px"></div>
<div class="btn" style="left:185px;top:824px;width:32px;height:29px"></div>
<div class="btn" style="left:228px;top:824px;width:32px;height:29px"></div>
<div class="btn" style="left:263px;top:824px;width:32px;height:29px"></div>
<div class="btn" style="left:306px;top:824px;width:32px;height:29px"></div>
<div class="btn" style="left:341px;top:824px;width:32px;height:29px"></div>
<div class="btn" style="left:384px;top:824px;width:32px;height:29px"></div>
<div class="btn" style="left:427px;top:824px;width:32px;height:29px"></div>
<svg class="a" style="left:0;top:0" width="1440" height="860" viewBox="0 0 1440 860">
  <!-- 360 -->
  <text x="88" y="843" font-family="Liberation Sans" font-size="10" font-weight="bold" text-anchor="middle" fill="#111">360</text>
  <path d="M82 833.5 A7.5 5.5 0 0 1 95 832" fill="none" stroke="#111" stroke-width="1.5"/>
  <path d="M95.5 829 L96 833.5 L91.5 833" fill="#111"/>
  <path d="M94 846.5 A7.5 5.5 0 0 1 81 848" fill="none" stroke="#111" stroke-width="1.5"/>
  <path d="M80.5 851 L80 846.5 L84.5 847" fill="#111"/>
  <!-- hand -->
  <path d="M117 838 L115 832 Q115 830 117 831 L119.5 836 L118.5 829 Q119 827 121 828.5 L122.5 835 L123 828 Q124 826 125.5 828 L126 835 L127.5 829.5 Q129 828 130 830 L129 838 L132 835 Q134 834 133.5 836.5 L129 844 Q127 847 123 847 Q119 847 118 844 Z" fill="#000"/>
  <!-- zoom out/in -->
  <g fill="none" stroke="#000">
    <circle cx="164.5" cy="836.5" r="7" stroke-width="2.6"/>
    <path d="M169.5 841.5 L174.5 846.5" stroke-width="3.6" stroke-linecap="round"/>
    <path d="M161 836.5 H168" stroke-width="2.2"/>
    <circle cx="199.5" cy="836.5" r="7" stroke-width="2.6"/>
    <path d="M204.5 841.5 L209.5 846.5" stroke-width="3.6" stroke-linecap="round"/>
    <path d="M196 836.5 H203 M199.5 833 V840" stroke-width="2.2"/>
  </g>
  <!-- rotate icons -->
  <g fill="none" stroke-linecap="butt">
    <path d="M243.5 828.5 A8 9.8 0 0 1 243.5 848" stroke="#000" stroke-width="3.4"/>
    <path d="M243.5 848 A8 9.8 0 0 1 236 834" stroke="#000" stroke-width="3.4"/>
    <path d="M243.5 848 A8 9.8 0 0 1 236 834" stroke="#fff" stroke-width="1.4"/>
    <path d="M231.5 838 L236 831.5 L240.5 838 Z" fill="#fff" stroke="#000" stroke-width="1"/>
    <path d="M278.5 828.5 A8 9.8 0 0 0 278.5 848" stroke="#000" stroke-width="3.4"/>
    <path d="M278.5 828.5 A8 9.8 0 0 1 286 842" stroke="#000" stroke-width="3.4"/>
    <path d="M278.5 828.5 A8 9.8 0 0 1 286 842" stroke="#fff" stroke-width="1.4"/>
    <path d="M281.5 838 L286 844.5 L290.5 838 Z" fill="#fff" stroke="#000" stroke-width="1"/>
    <path d="M312.5 839 A9.8 7.5 0 0 1 331.5 839" stroke="#000" stroke-width="3.4"/>
    <path d="M331.5 839 A9.8 7.5 0 0 1 318 845.5" stroke="#000" stroke-width="3.4"/>
    <path d="M331.5 839 A9.8 7.5 0 0 1 318 845.5" stroke="#fff" stroke-width="1.4"/>
    <path d="M321 841 L314.5 845.5 L321 850 Z" fill="#fff" stroke="#000" stroke-width="1"/>
    <path d="M347.5 839 A9.8 7.5 0 0 1 366.5 839" stroke="#000" stroke-width="3.4"/>
    <path d="M347.5 839 A9.8 7.5 0 0 0 361 845.5" stroke="#000" stroke-width="3.4"/>
    <path d="M347.5 839 A9.8 7.5 0 0 0 361 845.5" stroke="#fff" stroke-width="1.4"/>
    <path d="M358 841 L364.5 845.5 L358 850 Z" fill="#fff" stroke="#000" stroke-width="1"/>
  </g>
  <!-- bulb -->
  <path d="M400 828.5 Q395 828.5 395 834 Q395 837 397.5 839.5 V843 H402.5 V839.5 Q405 837 405 834 Q405 828.5 400 828.5 Z" fill="none" stroke="#000" stroke-width="1.3"/>
  <path d="M397.5 845 H402.5 M398 847 H402" stroke="#000" stroke-width="1.3"/>
  <!-- home -->
  <path d="M443 830 L434.5 838 H437 V845 H441 V841 H445 V845 H449 V838 H451.5 Z" fill="#000"/>
  <!-- checkbox -->
  <rect x="819.5" y="831.5" width="12" height="12" fill="#fff" stroke="#333" stroke-width="1"/>
</svg>
<div class="t" style="left:835px;top:833px;font-size:12.5px;color:#000">Прозрачные стены</div>
<div class="btn" style="left:956px;top:824px;width:162px;height:29px"></div>
<svg class="a" style="left:973px;top:833px" width="21" height="13" viewBox="0 0 21 13">
  <rect x="0" y="0.5" width="14" height="12" fill="#000"/><path d="M14 6.5 L20.5 0.5 V12.5 Z" fill="#000"/>
</svg>
<div class="t" style="left:999px;top:834px;font-size:11px;color:#000">Виртуальный визит</div>

<div class="a" style="left:1122px;top:110px;width:318px;height:750px;background:#f0f0f0"></div>
<div class="a" style="left:1125px;top:154px;width:315px;height:705px;background:#fff;border-left:1px solid #d4d4d4;border-bottom:1px solid #d4d4d4"></div>
<div class="a" style="left:1228px;top:117px;width:99px;height:38px;background:#f0f0f0;border:1px solid #d9d9d9;border-bottom:none"></div>
<div class="a" style="left:1326px;top:117px;width:99px;height:38px;background:#f0f0f0;border:1px solid #d9d9d9;border-bottom:none"></div>
<div class="a" style="left:1125px;top:115px;width:104px;height:41px;background:#fff;border:1px solid #d0d0d0;border-bottom:none"></div>
<div class="t" style="left:1157.5px;top:130px;font-size:11px;color:#000">Проект</div>
<div class="t" style="left:1259.5px;top:132px;font-size:11px;color:#000">Этажи</div>
<div class="t" style="left:1352px;top:132px;font-size:11px;color:#000">Свойства</div>
<div class="a" style="left:1129px;top:159px;width:309px;height:25px;background:linear-gradient(#b9d1eb,#dae7f5)"></div>
<div class="t" style="left:1141px;top:166.5px;font-size:11.5px;font-weight:bold;color:#111">Дизайн</div>
<div class="btn" style="left:1136px;top:192px;width:93px;height:78px"></div>
<div class="t" style="left:1136px;top:237px;width:93px;text-align:center;font-size:11px;line-height:13px;color:#000">Нарисовать<br>комнату</div>
<div class="btn" style="left:1237px;top:192px;width:93px;height:78px"></div>
<div class="t" style="left:1237px;top:237px;width:93px;text-align:center;font-size:11px;line-height:13px;color:#000">Добавить<br>комнату</div>
<div class="btn" style="left:1338px;top:192px;width:93px;height:78px"></div>
<div class="t" style="left:1338px;top:237px;width:93px;text-align:center;font-size:11px;line-height:13px;color:#000">Нарисовать<br>перегородку</div>
<div class="btn" style="left:1136px;top:278px;width:93px;height:78px"></div>
<div class="t" style="left:1136px;top:323px;width:93px;text-align:center;font-size:11px;line-height:13px;color:#000">Добавить<br>мебель</div>
<div class="btn" style="left:1237px;top:278px;width:93px;height:78px"></div>
<div class="t" style="left:1237px;top:323px;width:93px;text-align:center;font-size:11px;line-height:13px;color:#000">Добавить<br>дверь</div>
<div class="btn" style="left:1338px;top:278px;width:93px;height:78px"></div>
<div class="t" style="left:1338px;top:323px;width:93px;text-align:center;font-size:11px;line-height:13px;color:#000">Добавить<br>окно</div>
<div class="btn" style="left:1136px;top:364px;width:93px;height:78px"></div>
<div class="t" style="left:1136px;top:409px;width:93px;text-align:center;font-size:11px;line-height:13px;color:#000">Добавить<br>освещение</div>
<div class="btn" style="left:1237px;top:364px;width:93px;height:78px"></div>
<div class="t" style="left:1237px;top:409px;width:93px;text-align:center;font-size:11px;line-height:13px;color:#000">Лестницы и<br>вырезы</div>
<div class="btn" style="left:1338px;top:364px;width:93px;height:78px"></div>
<div class="t" style="left:1338px;top:409px;width:93px;text-align:center;font-size:11px;line-height:13px;color:#000">Добавить<br>колонну</div>
<div class="a" style="left:1129px;top:450px;width:309px;height:25px;background:linear-gradient(#b9d1eb,#dae7f5)"></div>
<div class="t" style="left:1141px;top:457px;font-size:11.7px;font-weight:bold;color:#111">Список объектов</div>
<div class="t" style="left:1345px;top:457px;font-size:11px;color:#222">Вид списка</div>
<svg class="a" style="left:1408px;top:453px" width="18" height="17" viewBox="0 0 18 17">
<rect x="0.5" y="0.5" width="17" height="16" fill="#fbfbfb" stroke="#7a7a7a"/>
<rect x="3" y="3" width="3" height="2.5" fill="#3a78c8"/><rect x="6" y="7.5" width="3" height="2.5" fill="#3a78c8"/><rect x="6" y="11.5" width="3" height="2.5" fill="#3a78c8"/>
<path d="M4.5 5.5 V13 H6 M4.5 8.7 H6 M7.5 4.2 H15 M10 8.7 H15 M10 12.7 H15" stroke="#555" stroke-width="0.8" fill="none"/>
</svg>
<div class="a" style="left:1132px;top:479px;width:303px;height:373px;background:#fff;border:1px solid #828790"></div>
<div class="a" style="left:1416px;top:480px;width:18px;height:371px;background:#f0f0f0"></div>
<div class="a" style="left:1417px;top:498px;width:15px;height:178px;background:#cdcdcd"></div>
<svg class="a" style="left:1416px;top:480px" width="18" height="371" viewBox="0 0 18 371">
<path d="M5.5 14 L9 10.5 L12.5 14" fill="none" stroke="#555" stroke-width="1.3"/>
<path d="M5.5 360 L9 363.5 L12.5 360" fill="none" stroke="#555" stroke-width="1.3"/>
</svg>
<div class="a" style="left:1133px;top:480px;width:283px;height:371px;overflow:hidden">
<svg class="a" style="left:3px;top:2px" width="34" height="30" viewBox="0 0 34 30">
<path d="M4.4 12.4 L19.5 4 L31.4 9.3 L16.8 18.5 Z" fill="#f4f4f4"/>
<path d="M19.5 4 L31.4 9.3 L24 13.5 L19.5 10.5 Z" fill="#4e4e4e"/>
<path d="M8 13 L19.5 10.5 L24 13.5 L16.8 17 Z" fill="#d6d6d6"/>
<path d="M4.4 12.4 L16.8 18.8 V28.3 L5.3 20.8 Z" fill="#5a5a5a"/>
<path d="M16.8 18.8 L31.4 10 V17.2 L16.8 28.3 Z" fill="#fafafa" stroke="#c8c8c8" stroke-width="0.5"/>
<path d="M4.4 12.4 L19.5 4 L31.4 9.3" fill="none" stroke="#9a9a9a" stroke-width="0.6"/>
</svg>
<div class="t" style="left:41px;top:7px;font-size:12.8px;color:#1a1a1a">Комната 2</div>
<div class="t" style="left:41px;top:24px;font-size:11.2px;color:#333">300.0 x 580.0</div>
<svg class="a" style="left:258px;top:15px" width="17" height="12" viewBox="0 0 17 12">
<path d="M1 6 Q8.5 -1.5 16 6 Q8.5 13.5 1 6 Z" fill="#eef6fc" stroke="#e8984a" stroke-width="1.6"/>
<circle cx="8.5" cy="6" r="2.9" fill="#3a3a3a" stroke="#3cc828" stroke-width="1.2"/>
<circle cx="9.2" cy="5.2" r="1.3" fill="#eee"/>
</svg>
<div class="a" style="left:1px;top:40px;width:282px;height:1px;background:#e0e0e0"></div>
<svg class="a" style="left:36px;top:45px" width="12" height="30" viewBox="0 0 12 30">
<path d="M0.5 1 L10.5 0.3 V27.5 L0.8 29 Z" fill="#4a2218"/>
<path d="M5.5 3 Q8 7 6 11 Q4 7 5.5 3 Z M6 11 Q8.2 15 5.5 19 Q3.5 15 6 11 Z M5.5 19 Q7.8 22.5 5.8 26 Q3.6 22.5 5.5 19 Z" fill="#cfc4c0"/>
</svg>
<div class="t" style="left:61px;top:47px;font-size:12.8px;color:#1a1a1a">Дверь</div>
<div class="t" style="left:61px;top:64px;font-size:11.2px;color:#333">80.0 x 15.0 x 200.0</div>
<svg class="a" style="left:258px;top:55px" width="17" height="12" viewBox="0 0 17 12">
<path d="M1 6 Q8.5 -1.5 16 6 Q8.5 13.5 1 6 Z" fill="#eef6fc" stroke="#e8984a" stroke-width="1.6"/>
<circle cx="8.5" cy="6" r="2.9" fill="#3a3a3a" stroke="#3cc828" stroke-width="1.2"/>
<circle cx="9.2" cy="5.2" r="1.3" fill="#eee"/>
</svg>
<div class="a" style="left:1px;top:80px;width:282px;height:1px;background:#e0e0e0"></div>
<svg class="a" style="left:3px;top:82px" width="34" height="30" viewBox="0 0 34 30">
<path d="M4.4 12.4 L19.5 4 L31.4 9.3 L16.8 18.5 Z" fill="#f4f4f4"/>
<path d="M19.5 4 L31.4 9.3 L24 13.5 L19.5 10.5 Z" fill="#4e4e4e"/>
<path d="M8 13 L19.5 10.5 L24 13.5 L16.8 17 Z" fill="#d6d6d6"/>
<path d="M4.4 12.4 L16.8 18.8 V28.3 L5.3 20.8 Z" fill="#5a5a5a"/>
<path d="M16.8 18.8 L31.4 10 V17.2 L16.8 28.3 Z" fill="#fafafa" stroke="#c8c8c8" stroke-width="0.5"/>
<path d="M4.4 12.4 L19.5 4 L31.4 9.3" fill="none" stroke="#9a9a9a" stroke-width="0.6"/>
</svg>
<div class="t" style="left:41px;top:87px;font-size:12.8px;color:#1a1a1a">Комната 3</div>
<div class="t" style="left:41px;top:104px;font-size:11.2px;color:#333">283.0 x 249.0</div>
<svg class="a" style="left:258px;top:95px" width="17" height="12" viewBox="0 0 17 12">
<path d="M1 6 Q8.5 -1.5 16 6 Q8.5 13.5 1 6 Z" fill="#eef6fc" stroke="#e8984a" stroke-width="1.6"/>
<circle cx="8.5" cy="6" r="2.9" fill="#3a3a3a" stroke="#3cc828" stroke-width="1.2"/>
<circle cx="9.2" cy="5.2" r="1.3" fill="#eee"/>
</svg>
<div class="a" style="left:1px;top:120px;width:282px;height:1px;background:#e0e0e0"></div>
<svg class="a" style="left:31px;top:125px" width="21" height="28" viewBox="0 0 21 28">
<path d="M2 3 L20 1 V24 L2 27 Z" fill="#fafafa" stroke="#9a9a9a" stroke-width="0.9"/>
<path d="M10 2.2 V25.8 M6 3 V26 M14 2 V25" stroke="#b0b0b0" stroke-width="0.7"/>
</svg>
<div class="t" style="left:61px;top:127px;font-size:12.8px;color:#1a1a1a">Двойное окно</div>
<div class="t" style="left:61px;top:144px;font-size:11.2px;color:#333">147.0 x 15.0 x 142.0</div>
<svg class="a" style="left:258px;top:135px" width="17" height="12" viewBox="0 0 17 12">
<path d="M1 6 Q8.5 -1.5 16 6 Q8.5 13.5 1 6 Z" fill="#eef6fc" stroke="#e8984a" stroke-width="1.6"/>
<circle cx="8.5" cy="6" r="2.9" fill="#3a3a3a" stroke="#3cc828" stroke-width="1.2"/>
<circle cx="9.2" cy="5.2" r="1.3" fill="#eee"/>
</svg>
<div class="a" style="left:1px;top:160px;width:282px;height:1px;background:#e0e0e0"></div>
<svg class="a" style="left:36px;top:165px" width="12" height="30" viewBox="0 0 12 30">
<path d="M0.5 1 L10.5 0.3 V27.5 L0.8 29 Z" fill="#4a2218"/>
<path d="M5.5 3 Q8 7 6 11 Q4 7 5.5 3 Z M6 11 Q8.2 15 5.5 19 Q3.5 15 6 11 Z M5.5 19 Q7.8 22.5 5.8 26 Q3.6 22.5 5.5 19 Z" fill="#cfc4c0"/>
</svg>
<div class="t" style="left:61px;top:167px;font-size:12.8px;color:#1a1a1a">Дверь</div>
<div class="t" style="left:61px;top:184px;font-size:11.2px;color:#333">80.0 x 15.0 x 200.0</div>
<svg class="a" style="left:258px;top:175px" width="17" height="12" viewBox="0 0 17 12">
<path d="M1 6 Q8.5 -1.5 16 6 Q8.5 13.5 1 6 Z" fill="#eef6fc" stroke="#e8984a" stroke-width="1.6"/>
<circle cx="8.5" cy="6" r="2.9" fill="#3a3a3a" stroke="#3cc828" stroke-width="1.2"/>
<circle cx="9.2" cy="5.2" r="1.3" fill="#eee"/>
</svg>
<div class="a" style="left:1px;top:200px;width:282px;height:1px;background:#e0e0e0"></div>
<svg class="a" style="left:31px;top:205px" width="20" height="27" viewBox="0 0 20 27">
<path d="M4 1 L18 2 V25 L4 26 L1 23 V3 Z" fill="#e8e8e8" stroke="#888" stroke-width="0.6"/>
<path d="M1 3 L4 5 V26 L1 23 Z" fill="#666"/>
<rect x="6" y="8" width="11" height="11" fill="#111"/>
<rect x="4" y="1" width="14" height="4" fill="#bbb"/>
</svg>
<div class="t" style="left:61px;top:207px;font-size:12.8px;color:#1a1a1a">Газовая плита</div>
<div class="t" style="left:61px;top:224px;font-size:11.2px;color:#333">51.0 x 62.1 x 86.9</div>
<svg class="a" style="left:258px;top:215px" width="17" height="12" viewBox="0 0 17 12">
<path d="M1 6 Q8.5 -1.5 16 6 Q8.5 13.5 1 6 Z" fill="#eef6fc" stroke="#e8984a" stroke-width="1.6"/>
<circle cx="8.5" cy="6" r="2.9" fill="#3a3a3a" stroke="#3cc828" stroke-width="1.2"/>
<circle cx="9.2" cy="5.2" r="1.3" fill="#eee"/>
</svg>
<div class="a" style="left:1px;top:240px;width:282px;height:1px;background:#e0e0e0"></div>
<svg class="a" style="left:3px;top:242px" width="34" height="30" viewBox="0 0 34 30">
<path d="M4.4 12.4 L19.5 4 L31.4 9.3 L16.8 18.5 Z" fill="#f4f4f4"/>
<path d="M19.5 4 L31.4 9.3 L24 13.5 L19.5 10.5 Z" fill="#4e4e4e"/>
<path d="M8 13 L19.5 10.5 L24 13.5 L16.8 17 Z" fill="#d6d6d6"/>
<path d="M4.4 12.4 L16.8 18.8 V28.3 L5.3 20.8 Z" fill="#5a5a5a"/>
<path d="M16.8 18.8 L31.4 10 V17.2 L16.8 28.3 Z" fill="#fafafa" stroke="#c8c8c8" stroke-width="0.5"/>
<path d="M4.4 12.4 L19.5 4 L31.4 9.3" fill="none" stroke="#9a9a9a" stroke-width="0.6"/>
</svg>
<div class="t" style="left:41px;top:247px;font-size:12.8px;color:#1a1a1a">Комната 7</div>
<div class="t" style="left:41px;top:264px;font-size:11.2px;color:#333">283.0 x 431.0</div>
<svg class="a" style="left:258px;top:255px" width="17" height="12" viewBox="0 0 17 12">
<path d="M1 6 Q8.5 -1.5 16 6 Q8.5 13.5 1 6 Z" fill="#eef6fc" stroke="#e8984a" stroke-width="1.6"/>
<circle cx="8.5" cy="6" r="2.9" fill="#3a3a3a" stroke="#3cc828" stroke-width="1.2"/>
<circle cx="9.2" cy="5.2" r="1.3" fill="#eee"/>
</svg>
<div class="a" style="left:1px;top:280px;width:282px;height:1px;background:#e0e0e0"></div>
<svg class="a" style="left:36px;top:285px" width="12" height="30" viewBox="0 0 12 30">
<path d="M0.5 1 L10.5 0.3 V27.5 L0.8 29 Z" fill="#4a2218"/>
<path d="M5.5 3 Q8 7 6 11 Q4 7 5.5 3 Z M6 11 Q8.2 15 5.5 19 Q3.5 15 6 11 Z M5.5 19 Q7.8 22.5 5.8 26 Q3.6 22.5 5.5 19 Z" fill="#cfc4c0"/>
</svg>
<div class="t" style="left:61px;top:287px;font-size:12.8px;color:#1a1a1a">Дверь</div>
<div class="t" style="left:61px;top:304px;font-size:11.2px;color:#333">100.0 x 15.0 x 200.0</div>
<svg class="a" style="left:258px;top:295px" width="17" height="12" viewBox="0 0 17 12">
<path d="M1 6 Q8.5 -1.5 16 6 Q8.5 13.5 1 6 Z" fill="#eef6fc" stroke="#e8984a" stroke-width="1.6"/>
<circle cx="8.5" cy="6" r="2.9" fill="#3a3a3a" stroke="#3cc828" stroke-width="1.2"/>
<circle cx="9.2" cy="5.2" r="1.3" fill="#eee"/>
</svg>
<div class="a" style="left:1px;top:320px;width:282px;height:1px;background:#e0e0e0"></div>
<svg class="a" style="left:3px;top:322px" width="34" height="30" viewBox="0 0 34 30">
<path d="M4.4 12.4 L19.5 4 L31.4 9.3 L16.8 18.5 Z" fill="#f4f4f4"/>
<path d="M19.5 4 L31.4 9.3 L24 13.5 L19.5 10.5 Z" fill="#4e4e4e"/>
<path d="M8 13 L19.5 10.5 L24 13.5 L16.8 17 Z" fill="#d6d6d6"/>
<path d="M4.4 12.4 L16.8 18.8 V28.3 L5.3 20.8 Z" fill="#5a5a5a"/>
<path d="M16.8 18.8 L31.4 10 V17.2 L16.8 28.3 Z" fill="#fafafa" stroke="#c8c8c8" stroke-width="0.5"/>
<path d="M4.4 12.4 L19.5 4 L31.4 9.3" fill="none" stroke="#9a9a9a" stroke-width="0.6"/>
</svg>
<div class="t" style="left:41px;top:327px;font-size:12.8px;color:#1a1a1a">Комната 5</div>
<div class="t" style="left:41px;top:344px;font-size:11.2px;color:#333">173.0 x 133.0</div>
<svg class="a" style="left:258px;top:335px" width="17" height="12" viewBox="0 0 17 12">
<path d="M1 6 Q8.5 -1.5 16 6 Q8.5 13.5 1 6 Z" fill="#eef6fc" stroke="#e8984a" stroke-width="1.6"/>
<circle cx="8.5" cy="6" r="2.9" fill="#3a3a3a" stroke="#3cc828" stroke-width="1.2"/>
<circle cx="9.2" cy="5.2" r="1.3" fill="#eee"/>
</svg>
<div class="a" style="left:1px;top:360px;width:282px;height:1px;background:#e0e0e0"></div>
<svg class="a" style="left:36px;top:365px" width="12" height="30" viewBox="0 0 12 30">
<path d="M0.5 1 L10.5 0.3 V27.5 L0.8 29 Z" fill="#4a2218"/>
<path d="M5.5 3 Q8 7 6 11 Q4 7 5.5 3 Z M6 11 Q8.2 15 5.5 19 Q3.5 15 6 11 Z M5.5 19 Q7.8 22.5 5.8 26 Q3.6 22.5 5.5 19 Z" fill="#cfc4c0"/>
</svg>
<div class="t" style="left:61px;top:367px;font-size:12.8px;color:#1a1a1a">Дверь</div>
<div class="t" style="left:61px;top:384px;font-size:11.2px;color:#333">80.0 x 15.0 x 200.0</div>
<svg class="a" style="left:258px;top:375px" width="17" height="12" viewBox="0 0 17 12">
<path d="M1 6 Q8.5 -1.5 16 6 Q8.5 13.5 1 6 Z" fill="#eef6fc" stroke="#e8984a" stroke-width="1.6"/>
<circle cx="8.5" cy="6" r="2.9" fill="#3a3a3a" stroke="#3cc828" stroke-width="1.2"/>
<circle cx="9.2" cy="5.2" r="1.3" fill="#eee"/>
</svg>
</div>
<svg class="a" style="left:0;top:0" width="1440" height="860" viewBox="0 0 1440 860">
<defs>
  <linearGradient id="gcup" x1="0" x2="1"><stop offset="0" stop-color="#9fd2f2"/><stop offset="0.5" stop-color="#e8f6fd"/><stop offset="1" stop-color="#7fc0ea"/></linearGradient>
  <radialGradient id="gbulb" cx="0.4" cy="0.35" r="0.6"><stop offset="0" stop-color="#fffbb0"/><stop offset="1" stop-color="#f2c600"/></radialGradient>
  <linearGradient id="gchair" x1="0" y1="0" x2="0" y2="1"><stop offset="0" stop-color="#9cd0f6"/><stop offset="1" stop-color="#3e8ad8"/></linearGradient>
</defs>
<!-- 1 pencils in cup -->
<g>
  <path d="M1176 201 L1183 217 M1180 203 L1184 217 M1189 204 L1185 217" stroke="#8a5a2a" stroke-width="2"/>
  <path d="M1174.5 201.5 L1177 206 M1179 202.5 L1181 206" stroke="#888" stroke-width="2.4"/>
  <path d="M1190 202 L1188 207" stroke="#f29a30" stroke-width="2.2"/>
  <path d="M1173 214 H1192 L1190.5 231 Q1182.5 233 1174.5 231 Z" fill="url(#gcup)" stroke="#5aa0d0" stroke-width="0.8"/>
  <path d="M1178 215 L1186 230 M1186 215 L1180 230" stroke="#f08a20" stroke-width="1.8"/>
</g>
<!-- 2 room with plus -->
<g>
  <path d="M1268 208 L1282 200 L1300 209 L1300 222 L1285 231 L1268 222 Z" fill="#c8b89a"/>
  <path d="M1268 208 L1282 200 V216 L1268 224 Z" fill="#f2ead8" stroke="#b0a080" stroke-width="0.6"/>
  <path d="M1282 200 L1300 209 V222 L1282 215 Z" fill="#f4c832" stroke="#c89a10" stroke-width="0.6"/>
  <rect x="1271" y="207" width="5" height="6" fill="#6aa8e0"/>
  <path d="M1285 208 L1290 210 V214 L1295 216" stroke="#e8d8b0" stroke-width="1.4" fill="none"/>
  <circle cx="1275" cy="224.4" r="7" fill="#3cba3c" stroke="#fff" stroke-width="1"/>
  <path d="M1275 220.5 V228.3 M1271.1 224.4 H1278.9" stroke="#fff" stroke-width="1.8"/>
</g>
<!-- 3 brick wall -->
<g>
  <path d="M1370 207 L1374 203.5 H1400 L1397 207 Z" fill="#e88a80"/>
  <rect x="1370" y="207" width="27" height="24" fill="#d9605a"/>
  <path d="M1397 207 L1400 203.5 V228 L1397 231 Z" fill="#b84a44"/>
  <path d="M1370 213 H1397 M1370 219 H1397 M1370 225 H1397 M1379 207 V213 M1388 207 V213 M1374 213 V219 M1383 213 V219 M1392 213 V219 M1379 219 V225 M1388 219 V225 M1374 225 V231 M1383 225 V231 M1392 225 V231" stroke="#f0b0a8" stroke-width="1.2"/>
</g>
<!-- 4 armchair -->
<g>
  <path d="M1173 294 Q1172 287 1182 287 Q1194 286 1195 293 L1194 305 H1173 Z" fill="url(#gchair)" stroke="#3a78c0" stroke-width="0.6"/>
  <path d="M1171 298 Q1171 295 1175 296 L1176 307 H1172 Z" fill="#6ab0ec"/>
  <path d="M1175 303 H1193 Q1195 303 1195 307 L1193 310 H1175 Z" fill="#8ccaf4" stroke="#3a78c0" stroke-width="0.6"/>
  <path d="M1173 300 V316 M1177 309 V314 M1192 300 V316 M1189 309 V314" stroke="#f0a020" stroke-width="1.6"/>
</g>
<!-- 5 door -->
<g>
  <rect x="1272" y="286" width="24" height="32" fill="#e87a20"/>
  <rect x="1274.5" y="288.5" width="19" height="29.5" fill="#d8f0b0"/>
  <path d="M1274.5 303 Q1284 296 1293.5 303 V318 H1274.5 Z" fill="#6cc040"/>
  <circle cx="1278" cy="293" r="4" fill="#ffe040"/>
  <path d="M1280 291 L1293 287 V318 L1280 314 Z" fill="#e8a060" stroke="#c06020" stroke-width="0.8"/>
  <circle cx="1283" cy="303" r="1" fill="#7a3a10"/>
</g>
<!-- 6 window -->
<g>
  <rect x="1370" y="286" width="30" height="31" rx="2" fill="#d8d8d8" stroke="#b0b0b0" stroke-width="0.8"/>
  <rect x="1372.5" y="288.5" width="25" height="25" fill="#fff"/>
  <rect x="1374" y="290" width="9.5" height="22.5" fill="#1aa0e0"/>
  <rect x="1385.5" y="290" width="10.5" height="22.5" fill="#1aa0e0"/>
  <rect x="1374" y="295" width="9.5" height="1.5" fill="#fff"/>
</g>
<!-- 7 bulb -->
<g>
  <path d="M1182.5 372.7 Q1172 372.7 1172 382 Q1172 387 1176.5 391 Q1178 393 1178 395 H1187 Q1187 393 1188.5 391 Q1193 387 1193 382 Q1193 372.7 1182.5 372.7 Z" fill="url(#gbulb)" stroke="#d0a800" stroke-width="0.6"/>
  <rect x="1178" y="395" width="9" height="6" rx="1" fill="#c8c8c8" stroke="#888" stroke-width="0.5"/>
  <path d="M1178 397 H1187 M1178 399 H1187" stroke="#888" stroke-width="0.6"/>
  <path d="M1181 401 H1184 V403 H1181 Z" fill="#555"/>
</g>
<!-- 8 stairs -->
<g>
  <path d="M1271 392 V401 M1271 393 L1290 375 L1292 375" stroke="#222" stroke-width="1" fill="none"/>
  <rect x="1275" y="397.5" width="24" height="4" fill="#c05a10"/>
  <rect x="1279" y="392.5" width="20" height="4" fill="#c05a10"/>
  <rect x="1283" y="387.5" width="16" height="4" fill="#c05a10"/>
  <rect x="1288" y="382.5" width="11" height="4" fill="#c05a10"/>
</g>
<!-- 9 column -->
<g>
  <rect x="1369" y="373" width="31.5" height="3" fill="#e8e8e8" stroke="#aaa" stroke-width="0.5"/>
  <path d="M1370 376 Q1368 384 1374 386 Q1378 386 1378 381 H1391 Q1391 386 1395 386 Q1401 384 1399 376 Z" fill="#efefef" stroke="#999" stroke-width="0.8"/>
  <circle cx="1374" cy="381" r="2.5" fill="none" stroke="#888" stroke-width="0.8"/>
  <circle cx="1395" cy="381" r="2.5" fill="none" stroke="#888" stroke-width="0.8"/>
  <rect x="1375" y="386" width="19" height="15.5" fill="#f0f0f0" stroke="#aaa" stroke-width="0.6"/>
  <path d="M1378.5 387 V401 M1382.5 387 V401 M1386.5 387 V401 M1390.5 387 V401" stroke="#b0b0b0" stroke-width="1"/>
</g>
</svg>

<div class="a" style="left:0;top:110px;width:1440px;height:1px;background:#fafafa"></div>


</body></html>
